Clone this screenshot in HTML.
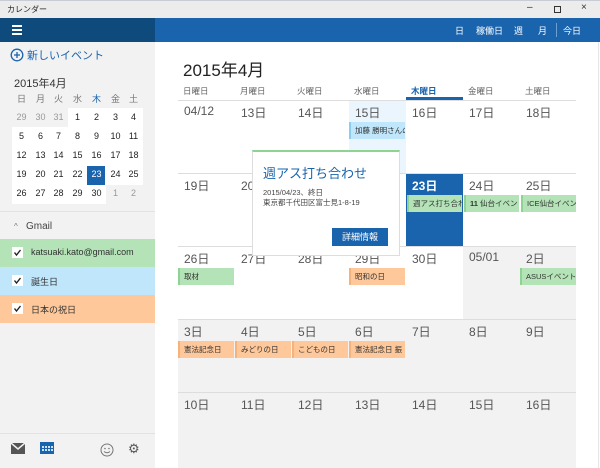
<!DOCTYPE html><html><head><meta charset="utf-8"><style>
*{margin:0;padding:0;box-sizing:border-box}
body{width:600px;height:468px;overflow:hidden;background:#fff;font-family:"Liberation Sans","Noto Sans CJK JP",sans-serif;position:relative;color:#333}
.a{position:absolute}
.t{position:absolute;white-space:nowrap}
.ev{position:absolute;height:17px;font-size:7.5px;line-height:17px;padding-left:4px;overflow:hidden;white-space:nowrap;color:#333}
.g{background:#b3e3b6;border-left:2px solid #8fd394}
.o{background:#fec89a;border-left:2px solid #f7b27a}
.b{background:#bfe6fb;border-left:2px solid #8cccf0}
.dn{position:absolute;font-size:12px;color:#555}
.mc{position:absolute;font-size:9px;width:19px;text-align:center}
.cb{position:absolute;left:12px;width:11px;height:11px;background:#fff}
</style></head><body>
<div class="a" style="left:0;top:0;width:600px;height:18px;background:#ececec;border-top:1px solid #c8cdd5"></div>
<div class="t" style="left:7px;top:4px;font-size:8px;color:#222">カレンダー</div>
<div class="t" style="left:527px;top:2px;font-size:10px;color:#333">–</div>
<div class="a" style="left:554px;top:6px;width:7px;height:7px;border:1px solid #333"></div>
<div class="t" style="left:581px;top:2px;font-size:10px;color:#333">×</div>
<div class="a" style="left:0;top:18px;width:155px;height:24px;background:#0f4a7c"></div>
<div class="a" style="left:155px;top:18px;width:445px;height:24px;background:#1a63ad"></div>
<div class="a" style="left:12px;top:25px;width:10px;height:2px;background:#fff;box-shadow:0 4px 0 #fff,0 8px 0 #fff"></div>
<div class="t" style="left:455px;top:24px;font-size:9px;color:#fff">日</div>
<div class="t" style="left:476px;top:24px;font-size:9px;color:#fff">稼働日</div>
<div class="t" style="left:514px;top:24px;font-size:9px;color:#fff">週</div>
<div class="t" style="left:538px;top:24px;font-size:9px;color:#fff">月</div>
<div class="a" style="left:556px;top:23px;width:1px;height:14px;background:#6d9fd0"></div>
<div class="t" style="left:563px;top:24px;font-size:9px;color:#fff">今日</div>
<div class="a" style="left:0;top:42px;width:155px;height:426px;background:#f2f2f2"></div>
<svg class="a" style="left:10px;top:48px" width="14" height="14"><circle cx="7" cy="7" r="5.8" fill="none" stroke="#1a63ad" stroke-width="1.3"/><path d="M7 4V10M4 7H10" stroke="#1a63ad" stroke-width="1.3"/></svg>
<div class="t" style="left:27px;top:47px;font-size:11px;color:#1a63ad">新しいイベント</div>
<div class="t" style="left:14px;top:75px;font-size:11px;color:#333">2015年4月</div>
<div class="a" style="left:68px;top:108px;width:75px;height:19px;background:#fff"></div>
<div class="a" style="left:12px;top:127px;width:131px;height:58px;background:#fff"></div>
<div class="a" style="left:12px;top:185px;width:94px;height:19px;background:#fff"></div>
<div class="a" style="left:87px;top:166px;width:18px;height:19px;background:#1a63ad"></div>
<div id="mini"></div>
<div class="a" style="left:0;top:211px;width:155px;height:1px;background:#e2e2e2"></div>
<div class="t" style="left:14px;top:222px;font-size:8px;color:#777">^</div>
<div class="t" style="left:26px;top:221px;font-size:10px;color:#444">Gmail</div>
<div class="a" style="left:0;top:239px;width:155px;height:28px;background:#b3e3b6"></div>
<div class="a" style="left:0;top:267px;width:155px;height:28px;background:#bfe6fb"></div>
<div class="a" style="left:0;top:295px;width:155px;height:28px;background:#fec89a"></div>
<div class="cb" style="top:247px"></div><div class="cb" style="top:275px"></div><div class="cb" style="top:303px"></div>
<svg class="a" style="left:12px;top:247px" width="11" height="11"><path d="M2.5 5.5L4.5 8L8.5 3" stroke="#222" stroke-width="1.4" fill="none"/></svg>
<svg class="a" style="left:12px;top:275px" width="11" height="11"><path d="M2.5 5.5L4.5 8L8.5 3" stroke="#222" stroke-width="1.4" fill="none"/></svg>
<svg class="a" style="left:12px;top:303px" width="11" height="11"><path d="M2.5 5.5L4.5 8L8.5 3" stroke="#222" stroke-width="1.4" fill="none"/></svg>
<div class="t" style="left:31px;top:247px;font-size:9px;color:#333">katsuaki.kato@gmail.com</div>
<div class="t" style="left:31px;top:275px;font-size:9px;color:#333">誕生日</div>
<div class="t" style="left:31px;top:303px;font-size:9px;color:#333">日本の祝日</div>
<div class="a" style="left:0;top:433px;width:155px;height:1px;background:#e2e2e2"></div>
<svg class="a" style="left:11px;top:443px" width="14" height="11"><rect width="14" height="11" fill="#555"/><path d="M0 0L7 6L14 0" stroke="#f2f2f2" stroke-width="1.5" fill="none"/></svg>
<svg class="a" style="left:40px;top:442px" width="14" height="12"><rect width="14" height="12" fill="#1a63ad"/><g fill="#cfe2f5"><rect x="2" y="4" width="2" height="2"/><rect x="5" y="4" width="2" height="2"/><rect x="8" y="4" width="2" height="2"/><rect x="11" y="4" width="2" height="2"/><rect x="2" y="7" width="2" height="2"/><rect x="5" y="7" width="2" height="2"/><rect x="8" y="7" width="2" height="2"/><rect x="11" y="7" width="2" height="2"/></g></svg>
<svg class="a" style="left:100px;top:443px" width="14" height="14"><circle cx="7" cy="7" r="6" fill="none" stroke="#777"/><circle cx="5" cy="5.5" r=".8" fill="#777"/><circle cx="9" cy="5.5" r=".8" fill="#777"/><path d="M4 8.5Q7 11 10 8.5" stroke="#777" fill="none"/></svg>
<div class="t" style="left:128px;top:441px;font-size:13px;color:#555">⚙</div>
<div class="t" style="left:183px;top:56px;font-size:17px;color:#222">2015年4月</div>
<div class="a" style="left:349px;top:100px;width:57px;height:73px;background:#eaf5fd"></div>
<div class="a" style="left:463px;top:246px;width:113px;height:73px;background:#f2f2f2"></div>
<div class="a" style="left:178px;top:319px;width:398px;height:149px;background:#f2f2f2"></div>
<div class="a" style="left:406px;top:173px;width:57px;height:73px;background:#1a63ad"></div>
<div id="grid"></div>
<div class="a" style="left:406px;top:97px;width:57px;height:3px;background:#1a63ad"></div>
<div class="a" style="left:598px;top:42px;width:1px;height:426px;background:#e6e6e6"></div>
<div class="ev b" style="left:349px;top:122px;width:56px">加藤 勝明さんの</div>
<div class="ev g" style="left:407px;top:195px;width:55px">週アス打ち合わ</div>
<div class="ev g" style="left:464px;top:195px;width:55px"><b>11</b> 仙台イベント</div>
<div class="ev g" style="left:521px;top:195px;width:55px">ICE仙台イベント</div>
<div class="ev g" style="left:178px;top:268px;width:56px">取材</div>
<div class="ev o" style="left:349px;top:268px;width:56px">昭和の日</div>
<div class="ev g" style="left:520px;top:268px;width:56px">ASUSイベント</div>
<div class="ev o" style="left:178px;top:341px;width:56px">憲法記念日</div>
<div class="ev o" style="left:235px;top:341px;width:56px">みどりの日</div>
<div class="ev o" style="left:292px;top:341px;width:56px">こどもの日</div>
<div class="ev o" style="left:349px;top:341px;width:56px">憲法記念日 振</div>
<div class="a" style="left:252px;top:150px;width:148px;height:106px;background:#fff;border:1px solid #ddd;border-top:2px solid #8fd394"></div>
<div class="t" style="left:263px;top:163px;font-size:13px;color:#1a63ad">週アス打ち合わせ</div>
<div class="t" style="left:263px;top:187px;font-size:7.5px;color:#444">2015/04/23、終日</div>
<div class="t" style="left:263px;top:197px;font-size:7.5px;color:#444">東京都千代田区富士見1-8-19</div>
<div class="a" style="left:332px;top:228px;width:56px;height:18px;background:#1a63ad;color:#fff;font-size:9px;line-height:18px;text-align:center">詳細情報</div>
<script>
var m=document.getElementById('mini'),h='';
var wd=['日','月','火','水','木','金','土'],xs=[12,31,49,68,87,106,124];
wd.forEach(function(d,i){h+='<div class="mc" style="left:'+xs[i]+'px;top:92px;color:'+(i==4?'#1a63ad':'#777')+'">'+d+'</div>'});
var days=[29,30,31];for(var i=1;i<=30;i++)days.push(i);days.push(1,2);
days.forEach(function(d,k){var r=Math.floor(k/7),c=k%7;var out=(k<3||k>32);var sel=(k==25);
h+='<div class="mc" style="left:'+xs[c]+'px;top:'+(112+r*19)+'px;color:'+(sel?'#fff':out?'#999':'#222')+'">'+d+'</div>'});
m.innerHTML=h;
var g=document.getElementById('grid'),s='';var cx=[178,235,292,349,406,463,520];
var wn=['日曜日','月曜日','火曜日','水曜日','木曜日','金曜日','土曜日'];
wn.forEach(function(d,i){s+='<div class="t" style="left:'+(cx[i]+5)+'px;top:85px;font-size:8.5px;'+(i==4?'color:#1a63ad;font-weight:bold':'color:#666')+'">'+d+'</div>'});
[100,173,246,319,392].forEach(function(y){s+='<div class="a" style="left:178px;top:'+y+'px;width:398px;height:1px;background:#ddd"></div>'});
var rows=[['04/12','13日','14日','15日','16日','17日','18日'],['19日','20日','21日','22日','23日','24日','25日'],['26日','27日','28日','29日','30日','05/01','2日'],['3日','4日','5日','6日','7日','8日','9日'],['10日','11日','12日','13日','14日','15日','16日']];
rows.forEach(function(r,ri){r.forEach(function(d,i){var st=(ri==1&&i==4)?'color:#fff;font-weight:bold':'';s+='<div class="dn" style="left:'+(cx[i]+6)+'px;top:'+(104+ri*73)+'px;'+st+'">'+d+'</div>'})});
g.innerHTML=s;
</script>
</body></html>
